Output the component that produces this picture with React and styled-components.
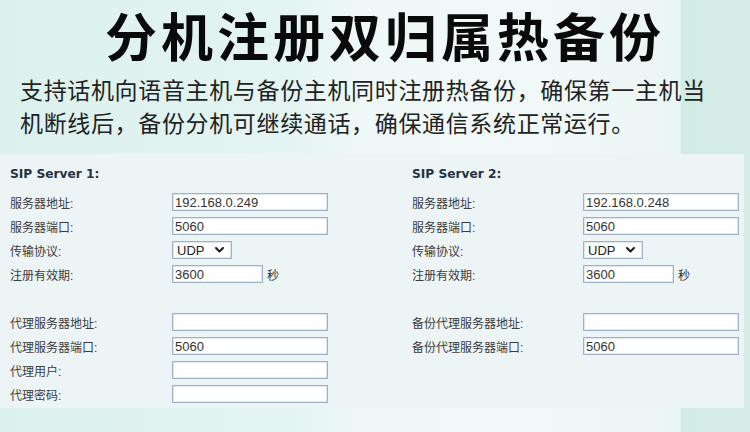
import React from 'react';
import styled, {createGlobalStyle} from 'styled-components';

const GlobalStyle = createGlobalStyle`
    html, body {
        margin: 0;
        padding: 0;
    }
    body {
        width: 750px;
        height: 432px;
        overflow: hidden;
        font-family: "Liberation Sans", "Noto Sans CJK SC", sans-serif;
        background: linear-gradient(90deg, #dcf1ed 0%, #e3f4f2 38%, #eef8f7 48%, #f1f9f8 70%, #eaf6f4 90.7%, #d3ebe5 90.8%, #d6ede7 100%);
    }
`;

const Page = styled.div`
    display: flex;
    flex-direction: column;
    width: 750px;
    height: 432px;
`;

const Title = styled.h1`
    margin: 0;
    padding-left: 20px;
    text-align: center;
    font-family: "Noto Sans CJK SC", sans-serif;
    font-weight: 700;
    font-size: 52px;
    line-height: 70px;
    letter-spacing: 4px;
    color: #0a0a0a;
`;

const Intro = styled.p`
    margin: 3px 0 0 20px;
    font-family: "Noto Sans CJK SC", sans-serif;
    font-size: 23px;
    line-height: 33px;
    letter-spacing: 0.65px;
    white-space: nowrap;
    color: #222;
`;

const Panel = styled.div`
    margin-top: 15px;
    width: 744px;
    height: 254px;
    box-sizing: border-box;
    padding-top: 12px;
    background: #edf4f6;
    display: grid;
    grid-template-columns: 402px 1fr;
`;

const Column = styled.div`
    padding-left: 10px;
    display: flex;
    flex-direction: column;
`;

const Heading = styled.div`
    font-family: "DejaVu Sans", Verdana, sans-serif;
    font-weight: 700;
    font-size: 12.2px;
    line-height: 16px;
    color: #243243;
    margin-bottom: 8px;
`;

const Row = styled.div`
    display: grid;
    grid-template-columns: ${p => p.$labelWidth}px 1fr;
    align-items: center;
    height: 24px;
`;

const Spacer = styled.div`
    height: ${p => p.$rows * 24}px;
`;

const Label = styled.span`
    font-size: 12px;
    color: #3b3b3b;
    white-space: nowrap;
`;

const Field = styled.div`
    display: flex;
    align-items: center;
    gap: 4px;
`;

const TextInput = styled.input`
    box-sizing: border-box;
    width: ${p => p.$width || 156}px;
    height: 18px;
    margin: 0;
    padding: 0 2px;
    border: 1px solid #9fb3c8;
    box-shadow: inset 0 0 0 1px #dfe7ef;
    background: #fff;
    font-family: "Liberation Sans", sans-serif;
    font-size: 13px;
    color: #333;
    outline: none;
`;

const Unit = styled.span`
    font-size: 12px;
    color: #333;
`;

const SelectBox = styled.div`
    box-sizing: border-box;
    width: 60px;
    height: 18px;
    display: flex;
    align-items: center;
    border: 1px solid #9fb3c8;
    box-shadow: inset 0 0 0 1px #dfe7ef;
    background: #fff;
    padding-right: 7px;

    select {
        flex: 1;
        min-width: 0;
        appearance: none;
        border: none;
        background: transparent;
        padding: 0 0 0 4px;
        margin: 0;
        font-family: "Liberation Sans", sans-serif;
        font-size: 13px;
        color: #222;
        outline: none;
    }
`;

const Chevron = () =>
    <svg width="9" height="6" viewBox="0 0 9 6">
        <path d="M1 1 L4.5 4.5 L8 1" fill="none" stroke="#1a1a1a" strokeWidth="2" strokeLinecap="round" strokeLinejoin="round"/>
    </svg>;

const Select = ({value}) =>
    <SelectBox>
        <select defaultValue={value}>
            <option>UDP</option>
            <option>TCP</option>
        </select>
        <Chevron/>
    </SelectBox>;

const server1 = {
    title: 'SIP Server 1:',
    labelWidth: 162,
    address: '192.168.0.249',
    proxy: [
        {label: '代理服务器地址:', value: ''},
        {label: '代理服务器端口:', value: '5060'},
        {label: '代理用户:', value: ''},
        {label: '代理密码:', value: ''},
    ],
};

const server2 = {
    title: 'SIP Server 2:',
    labelWidth: 171,
    address: '192.168.0.248',
    proxy: [
        {label: '备份代理服务器地址:', value: ''},
        {label: '备份代理服务器端口:', value: '5060'},
    ],
};

const ServerColumn = ({title, labelWidth, address, proxy}) =>
    <Column>
        <Heading>{title}</Heading>
        <Row $labelWidth={labelWidth}>
            <Label>服务器地址:</Label>
            <Field><TextInput defaultValue={address}/></Field>
        </Row>
        <Row $labelWidth={labelWidth}>
            <Label>服务器端口:</Label>
            <Field><TextInput defaultValue="5060"/></Field>
        </Row>
        <Row $labelWidth={labelWidth}>
            <Label>传输协议:</Label>
            <Field><Select value="UDP"/></Field>
        </Row>
        <Row $labelWidth={labelWidth}>
            <Label>注册有效期:</Label>
            <Field><TextInput $width={91} defaultValue="3600"/><Unit>秒</Unit></Field>
        </Row>
        <Spacer $rows={1}/>
        {proxy.map(({label, value}) =>
            <Row key={label} $labelWidth={labelWidth}>
                <Label>{label}</Label>
                <Field><TextInput defaultValue={value}/></Field>
            </Row>
        )}
    </Column>;

export default function App() {
    return <Page>
        <GlobalStyle/>
        <Title>分机注册双归属热备份</Title>
        <Intro>
            支持话机向语音主机与备份主机同时注册热备份，确保第一主机当<br/>
            机断线后，备份分机可继续通话，确保通信系统正常运行。
        </Intro>
        <Panel>
            <ServerColumn {...server1}/>
            <ServerColumn {...server2}/>
        </Panel>
    </Page>;
}
